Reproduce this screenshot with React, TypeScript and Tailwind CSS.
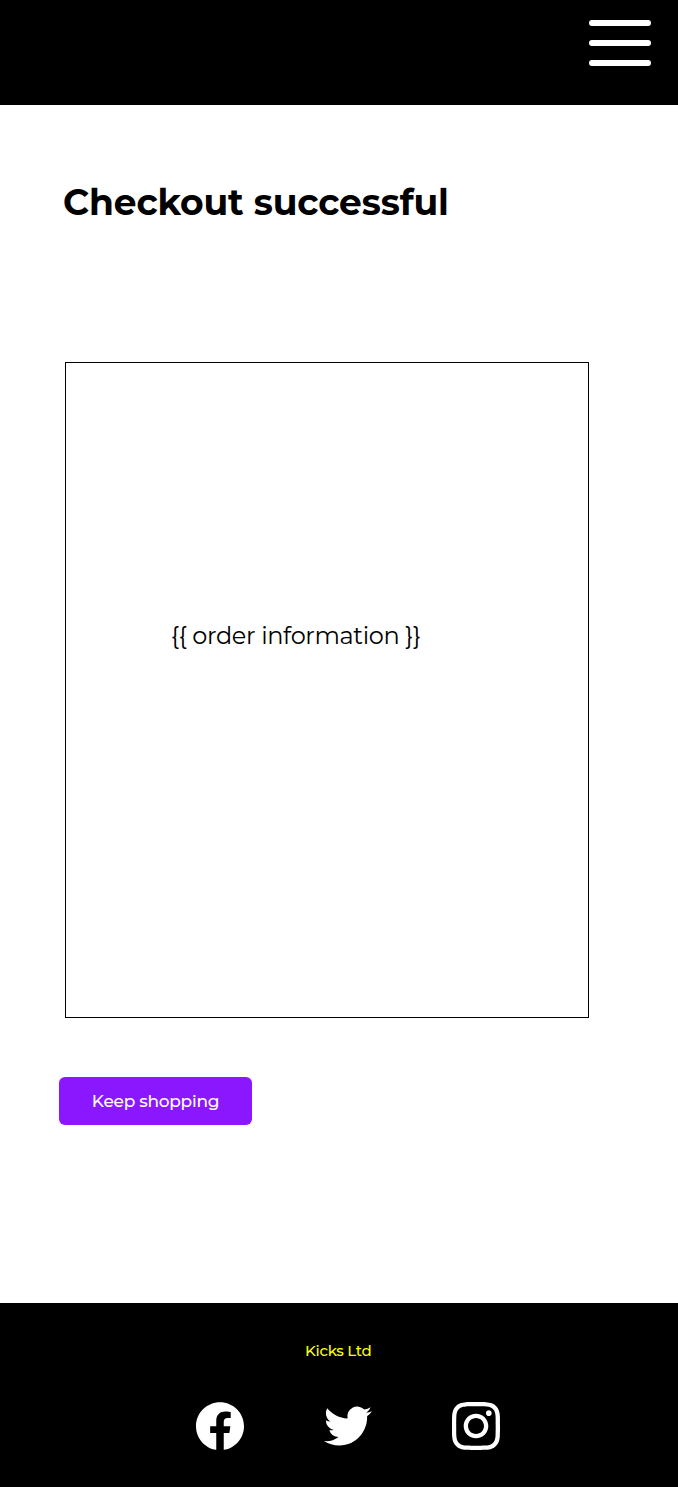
const socialIcons = [
  {
    name: "Facebook",
    path: "M24 12.073c0-6.627-5.373-12-12-12s-12 5.373-12 12c0 5.99 4.388 10.954 10.125 11.854v-8.385H7.078v-3.47h3.047V9.43c0-3.007 1.792-4.669 4.533-4.669 1.312 0 2.686.235 2.686.235v2.953H15.83c-1.491 0-1.956.925-1.956 1.874v2.25h3.328l-.532 3.47h-2.796v8.385C19.612 23.027 24 18.062 24 12.073z",
  },
  {
    name: "Twitter",
    path: "M23.953 4.57a10 10 0 01-2.825.775 4.958 4.958 0 002.163-2.723c-.951.555-2.005.959-3.127 1.184a4.92 4.92 0 00-8.384 4.482C7.69 8.095 4.067 6.13 1.64 3.162a4.822 4.822 0 00-.666 2.475c0 1.71.87 3.213 2.188 4.096a4.904 4.904 0 01-2.228-.616v.06a4.923 4.923 0 003.946 4.827 4.996 4.996 0 01-2.212.085 4.936 4.936 0 004.604 3.417 9.867 9.867 0 01-6.102 2.105c-.39 0-.779-.023-1.17-.067a13.995 13.995 0 007.557 2.209c9.053 0 13.998-7.496 13.998-13.985 0-.21 0-.42-.015-.63A9.935 9.935 0 0024 4.59z",
  },
  {
    name: "Instagram",
    path: "M12 0C8.74 0 8.333.015 7.053.072 5.775.132 4.905.333 4.14.63c-.789.306-1.459.717-2.126 1.384S.935 3.35.63 4.14C.333 4.905.131 5.775.072 7.053.012 8.333 0 8.74 0 12s.015 3.667.072 4.947c.06 1.277.261 2.148.558 2.913.306.788.717 1.459 1.384 2.126.667.666 1.336 1.079 2.126 1.384.766.296 1.636.499 2.913.558C8.333 23.988 8.74 24 12 24s3.667-.015 4.947-.072c1.277-.06 2.148-.262 2.913-.558.788-.306 1.459-.718 2.126-1.384.666-.667 1.079-1.335 1.384-2.126.296-.765.499-1.636.558-2.913.06-1.28.072-1.687.072-4.947s-.015-3.667-.072-4.947c-.06-1.277-.262-2.149-.558-2.913-.306-.789-.718-1.459-1.384-2.126C21.319 1.347 20.651.935 19.86.63c-.765-.297-1.636-.499-2.913-.558C15.667.012 15.26 0 12 0zm0 2.16c3.203 0 3.585.016 4.85.071 1.17.055 1.805.249 2.227.415.562.217.96.477 1.382.896.419.42.679.819.896 1.381.164.422.36 1.057.413 2.227.057 1.266.07 1.646.07 4.85s-.015 3.585-.074 4.85c-.061 1.17-.256 1.805-.421 2.227-.224.562-.479.96-.899 1.382-.419.419-.824.679-1.38.896-.42.164-1.065.36-2.235.413-1.274.057-1.649.07-4.859.07-3.211 0-3.586-.015-4.859-.074-1.171-.061-1.816-.256-2.236-.421-.569-.224-.96-.479-1.379-.899-.421-.419-.69-.824-.9-1.38-.165-.42-.359-1.065-.42-2.235-.045-1.26-.061-1.649-.061-4.844 0-3.196.016-3.586.061-4.861.061-1.17.255-1.814.42-2.234.21-.57.479-.96.9-1.381.419-.419.81-.689 1.379-.898.42-.166 1.051-.361 2.221-.421 1.275-.045 1.65-.06 4.859-.06l.045.03zm0 3.678c-3.405 0-6.162 2.76-6.162 6.162 0 3.405 2.76 6.162 6.162 6.162 3.405 0 6.162-2.76 6.162-6.162 0-3.405-2.76-6.162-6.162-6.162zM12 16c-2.21 0-4-1.79-4-4s1.79-4 4-4 4 1.79 4 4-1.79 4-4 4zm7.846-10.405c0 .795-.646 1.44-1.44 1.44-.795 0-1.44-.646-1.44-1.44 0-.794.646-1.439 1.44-1.439.793-.001 1.44.645 1.44 1.439z",
  },
];

export default function App() {
  return (
    <div className="flex min-h-[1487px] flex-col bg-white font-['Montserrat','Inter',sans-serif] text-black">
      <header className="flex h-[105px] justify-end bg-black pt-5 pr-[27px]">
        <button aria-label="Menu" className="flex h-[46px] w-[62px] flex-col justify-between">
          <span className="h-1.5 w-full rounded-full bg-white" />
          <span className="h-1.5 w-full rounded-full bg-white" />
          <span className="h-1.5 w-full rounded-full bg-white" />
        </button>
      </header>
      <main className="h-[1198px] pt-[75px] pl-[59px]">
        <h1 className="ml-1 h-[182px] text-[36px] leading-[45px] font-bold tracking-[-0.13px] whitespace-nowrap">
          Checkout successful
        </h1>
        <section className="ml-1.5 h-[656px] w-[524px] border border-black pt-[258px] pl-[105px]">
          <p className="text-2xl leading-[29px] tracking-[-0.36px] whitespace-nowrap">{"{{ order information }}"}</p>
        </section>
        <button className="mt-[59px] h-12 w-[193px] rounded-md bg-[#8b17ff] pt-0.5 text-[17px] font-medium tracking-[-0.28px] text-white">
          Keep shopping
        </button>
      </main>
      <footer className="flex h-[184px] flex-col items-center bg-black pt-[38px]">
        <p className="mr-[1.5px] text-[15px] leading-5 font-medium tracking-[-0.3px] text-[#fbff00]">Kicks Ltd</p>
        <div className="mt-[41px] ml-[18px] flex gap-20 text-white">
          {socialIcons.map((icon) => (
            <svg key={icon.name} aria-label={icon.name} viewBox="0 0 24 24" fill="currentColor" className="size-12">
              <path d={icon.path} />
            </svg>
          ))}
        </div>
      </footer>
    </div>
  );
}
